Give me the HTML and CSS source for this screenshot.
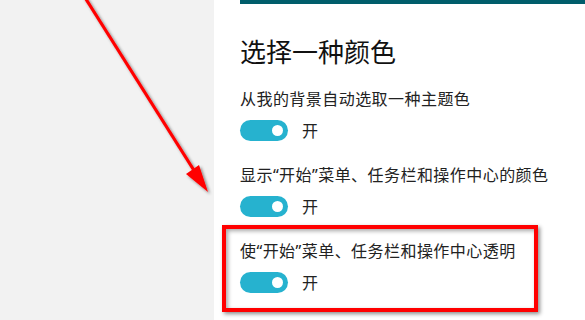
FILE: index.html
```html
<!DOCTYPE html>
<html lang="zh">
<head>
<meta charset="utf-8">
<link rel="stylesheet" href="styles.css">
</head>
<body>
<div class="page">
  <aside class="side"></aside>
  <main class="main">
    <div class="accent"></div>
    <h1 class="title">选择一种颜色</h1>
    <div class="settings">
      <div class="setting">
        <div class="label">从我的背景自动选取一种主题色</div>
        <div class="toggle-row"><span class="toggle"><span class="knob"></span></span><span class="state">开</span></div>
      </div>
      <div class="setting">
        <div class="label">显示“开始”菜单、任务栏和操作中心的颜色</div>
        <div class="toggle-row"><span class="toggle"><span class="knob"></span></span><span class="state">开</span></div>
      </div>
      <div class="setting">
        <div class="label">使“开始”菜单、任务栏和操作中心透明</div>
        <div class="toggle-row"><span class="toggle"><span class="knob"></span></span><span class="state">开</span></div>
      </div>
    </div>
  </main>
  <div class="highlight"></div>
  <svg class="arrow" width="585" height="320" viewBox="0 0 585 320">
    <defs>
      <filter id="sh" x="-20%" y="-20%" width="140%" height="140%">
        <feDropShadow dx="2" dy="2" stdDeviation="1.6" flood-color="#000" flood-opacity="0.45"/>
      </filter>
    </defs>
    <g filter="url(#sh)">
      <line x1="84" y1="-4" x2="195" y2="172" stroke="#ff0000" stroke-width="3.2"/>
      <polygon points="208,192 186,174 199,165" fill="#ff0000"/>
    </g>
  </svg>
</div>
</body>
</html>
```
FILE: styles.css
```css
* { box-sizing: border-box; }
html, body { margin: 0; padding: 0; }
body {
  width: 585px;
  height: 320px;
  overflow: hidden;
  background: #fff;
  font-family: "Noto Sans CJK SC", "Noto Sans", sans-serif;
  color: #1a1a1a;
}
.page {
  position: relative;
  display: flex;
  width: 585px;
  height: 320px;
}
.side {
  width: 214px;
  flex: none;
  background: #f2f2f2;
}
.main {
  flex: 1;
  padding-left: 26px;
  display: flex;
  flex-direction: column;
}
.accent {
  height: 4px;
  background: #005d6b;
}
.title {
  margin: 30px 0 0;
  font-size: 26px;
  line-height: 34px;
  font-weight: 400;
  color: #111;
}
.settings {
  margin-top: 20px;
  display: flex;
  flex-direction: column;
  gap: 23px;
}
.setting {
  display: flex;
  flex-direction: column;
}
.label {
  font-family: "Noto Sans", "Noto Sans CJK SC", sans-serif;
  font-size: 16px;
  line-height: 22px;
  letter-spacing: 0.45px;
  color: #222;
}
.toggle-row {
  margin-top: 10px;
  display: flex;
  align-items: center;
  gap: 14px;
  height: 21px;
}
.toggle {
  width: 48px;
  height: 21px;
  border-radius: 11px;
  background: #26b2cf;
  display: flex;
  align-items: center;
  justify-content: flex-end;
  padding-right: 5px;
}
.knob {
  width: 11px;
  height: 11px;
  border-radius: 50%;
  background: #fff;
}
.state {
  font-size: 16px;
  line-height: 21px;
  color: #222;
}
.highlight {
  position: absolute;
  left: 222px;
  top: 225px;
  width: 316px;
  height: 87px;
  border: 4px solid #ff0000;
  box-shadow: 2px 2px 4px rgba(0,0,0,0.45), inset 2px 2px 4px rgba(0,0,0,0.35);
}
.arrow {
  position: absolute;
  left: 0;
  top: 0;
}
```
